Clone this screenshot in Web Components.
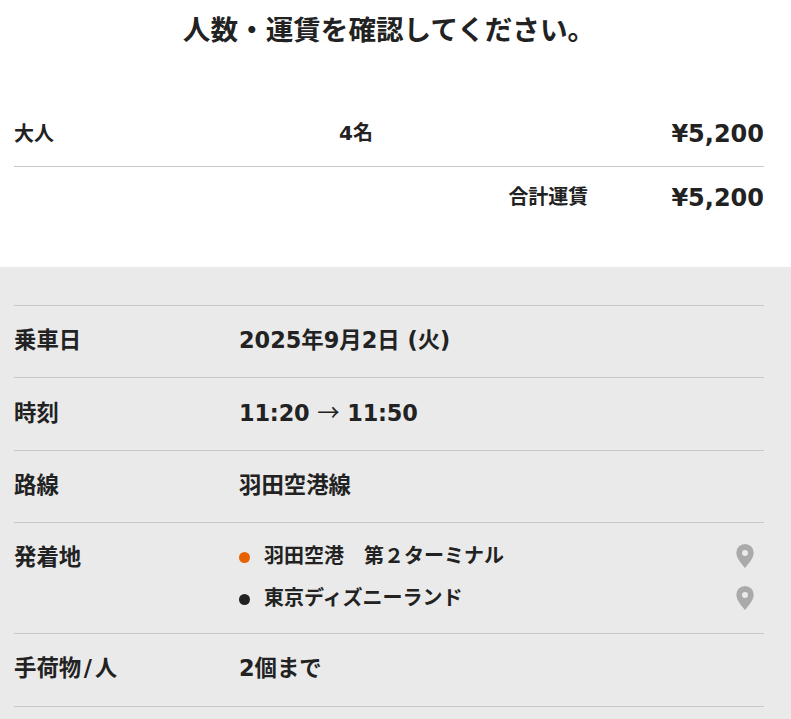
<!DOCTYPE html>
<html lang="ja"><head><meta charset="utf-8"><style>
html,body{margin:0;padding:0;background:#fff}
body{font-family:"DejaVu Sans","Noto Sans CJK JP",sans-serif;color:#222;font-weight:700;overflow:hidden;height:719px}
.cjk{font-family:"Noto Sans CJK JP",sans-serif;line-height:0;font-weight:400;letter-spacing:0}
.sl{margin:0 2.7px}
.tm{letter-spacing:-.15px}
</style></head><body>
<fare-summary></fare-summary>
<trip-details>
<detail-row><span slot="label">乗車日</span>2025年9月2日 (火)</detail-row>
<detail-row class="time"><span slot="label">時刻</span><span class="tm">11:20 <span class="cjk">→</span> 11:50</span></detail-row>
<detail-row><span slot="label">路線</span>羽田空港線</detail-row>
<detail-row class="stops"><span slot="label">発着地</span>
<stop-item color="#e86100">羽田空港　第２ターミナル</stop-item>
<stop-item color="#222">東京ディズニーランド</stop-item>
</detail-row>
<detail-row class="last"><span slot="label">手荷物<span class="sl">/</span>人</span>2個まで</detail-row>
</trip-details>
<script>
function def(name,html,init){customElements.define(name,class extends HTMLElement{constructor(){super();this.attachShadow({mode:'open'}).innerHTML=html;if(init)init(this)}})}
def('fare-summary',`<style>
:host{display:block;height:267px;box-sizing:border-box;padding:0 27px 0 14px;background:#fff}
h1{margin:0;height:62px;line-height:62px;font-size:27.6px;font-weight:700;text-align:center;white-space:nowrap;color:#222}
.r{display:grid;grid-template-columns:1fr 1fr 1fr;align-items:center}
.a{height:105px;padding-top:37px;border-bottom:1px solid #c8c8c8;box-sizing:border-box}
.l,.c{font-size:20px;line-height:28px;margin-top:2px}
.c{text-align:left;padding-left:75px;margin-top:0}
.p{text-align:right;font-size:24px;line-height:28px;margin-top:1px}
.a .p{margin-top:3px}
.b{display:flex;justify-content:flex-end;align-items:center;height:60px;gap:83px}
.t{font-size:20px;line-height:28px;margin-top:0}
</style><h1>人数・運賃を確認してください。</h1>
<div class="r a"><span class="l">大人</span><span class="c">4名</span><span class="p">¥5,200</span></div>
<div class="b"><span class="t">合計運賃</span><span class="p">¥5,200</span></div>`);
def('trip-details',`<style>
:host{display:block;background:#eaeaea;padding:38px 27px 0 14px;height:452px;box-sizing:border-box}
.w{border-top:1px solid #c8c8c8}
</style><div class="w"><slot></slot></div>`);
def('detail-row',`<style>
:host{display:grid;grid-template-columns:225px 1fr;border-bottom:1px solid #c8c8c8;padding:19px 0 21px;min-height:31.4px;font-size:22.4px;line-height:31.4px}
:host(.time){padding:20px 0}
:host(.last){padding:19px 0 21.6px}
:host(.stops){padding:11.5px 0 14.2px}
:host(.stops) .l{padding-top:7px}
.l{white-space:nowrap}
</style><span class="l"><slot name="label"></slot></span><div><slot></slot></div>`);
def('stop-item',`<style>
:host{display:flex;align-items:center;font-size:20px;line-height:30px;height:42px}
i{width:11px;height:11px;border-radius:50%;margin:4px 14px 0 0;flex:none}
span{flex:1}
svg{margin-right:9.500px;flex:none;margin-top:1px}
</style><i></i><span><slot></slot></span><svg width="20" height="26" viewBox="0 0 20 26"><path fill="#aaa" fill-rule="evenodd" d="M10 1a8.7 8.7 0 0 0-8.7 8.8c0 5.600 5.700 11.400 8.700 15.200 3-3.800 8.700-9.600 8.700-15.200A8.700 8.700 0 0 0 10 1zm0 6a3 3 0 1 1 0 6 3 3 0 0 1 0-6z"/></svg>`,el=>{queueMicrotask(()=>{el.shadowRoot.querySelector('i').style.background=el.getAttribute('color')})});
</script>
</body></html>
